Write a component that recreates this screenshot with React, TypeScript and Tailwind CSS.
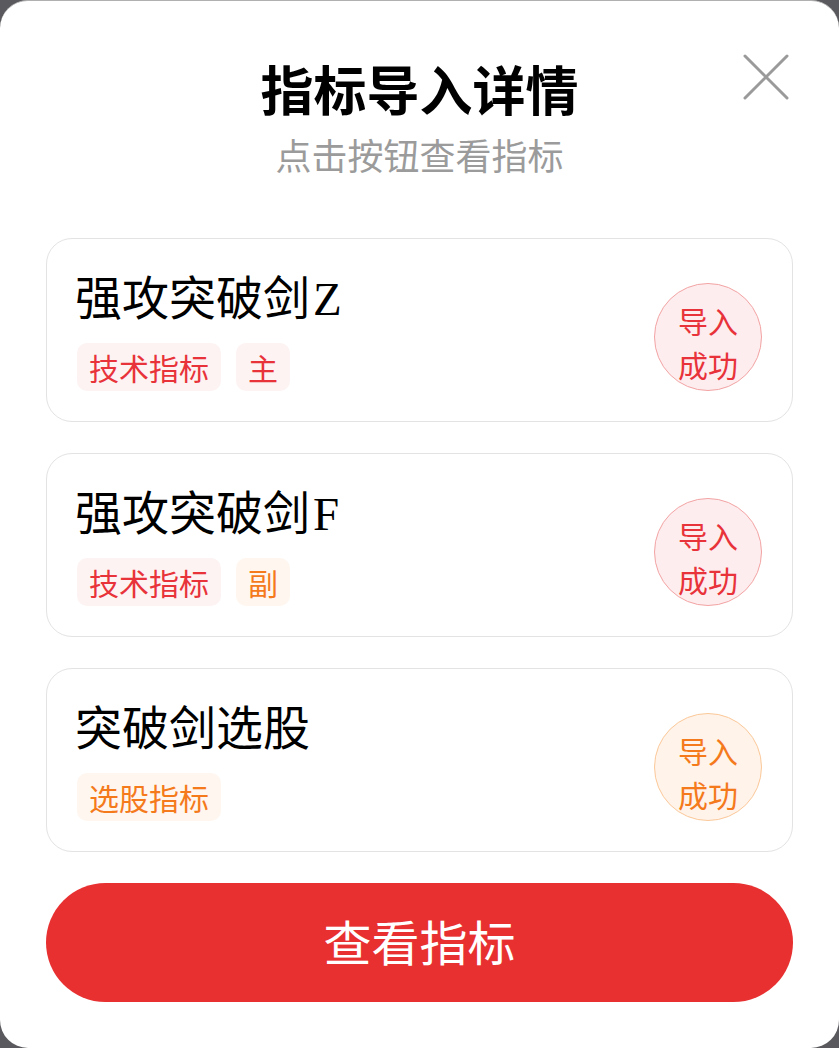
import React from 'react';

type Tone = 'red' | 'orange';

// 指标列表
const items: { name: string; suffix: string; tags: { label: string; tone: Tone }[]; tone: Tone }[] = [
  { name: '强攻突破剑', suffix: 'Z', tags: [{ label: '技术指标', tone: 'red' }, { label: '主', tone: 'red' }], tone: 'red' },
  { name: '强攻突破剑', suffix: 'F', tags: [{ label: '技术指标', tone: 'red' }, { label: '副', tone: 'orange' }], tone: 'red' },
  { name: '突破剑选股', suffix: '', tags: [{ label: '选股指标', tone: 'orange' }], tone: 'orange' },
];

const tagStyle: Record<Tone, string> = {
  red: 'bg-[#fdf3f3] text-[#e8333a]',
  orange: 'bg-[#fff6ef] text-[#f47a1c]',
};

const badgeStyle: Record<Tone, string> = {
  red: 'bg-[#fdedef] border-[#f3a3a3] text-[#e8333a]',
  orange: 'bg-[#fff3ea] border-[#fbc899] text-[#f47a1c]',
};

const Card = ({ item }: { item: (typeof items)[number] }) => (
  <div className="flex h-[184px] items-end justify-between rounded-[26px] border border-[#e3e3e3] px-[30px] pt-[27px] pb-[30px]">
    <div className="flex flex-col">
      <div className="-ml-[2px] h-[56px] whitespace-nowrap text-[47px] leading-[56px] text-black">
        {item.name}
        {item.suffix && (
          <span className="ml-[3px]" style={{ fontFamily: '"Liberation Serif", serif' }}>
            {item.suffix}
          </span>
        )}
      </div>
      <div className="mt-[20px] flex gap-[15px]">
        {item.tags.map((t) => (
          <span
            key={t.label}
            className={`h-[48px] rounded-[10px] px-[12px] text-[30px] leading-[48px] ${tagStyle[t.tone]}`}
          >
            {t.label}
          </span>
        ))}
      </div>
    </div>
    <div
      className={`flex h-[108px] w-[108px] flex-col items-center rounded-full border pt-[14px] text-[30px] leading-[44px] ${badgeStyle[item.tone]}`}
    >
      <span>导入</span>
      <span>成功</span>
    </div>
  </div>
);

const App = () => {
  return (
    <div
      className="h-[1048px] w-[839px] bg-[#5a5a5e]"
      style={{ fontFamily: '"Noto Sans CJK SC", "Noto Sans", sans-serif' }}
    >
      <div className="relative flex h-[1048px] flex-col rounded-[28px] border-t border-[#b0b0b0] bg-white px-[46px]">
        <button className="absolute left-[742px] top-[52px] h-[48px] w-[48px]" aria-label="关闭">
          <svg viewBox="0 0 48 48" className="h-[48px] w-[48px]" fill="none" stroke="#9a9a9a" strokeWidth="3" strokeLinecap="round">
            <path d="M3 3 L45 45 M45 3 L3 45" />
          </svg>
        </button>

        <h1 className="mt-[55px] text-center text-[53px] font-bold leading-[64px] text-black">指标导入详情</h1>
        <p className="mt-[12px] text-center text-[36px] leading-[44px] text-[#9b9b9b]">点击按钮查看指标</p>

        <div className="mt-[62px] flex flex-col gap-[31px]">
          {items.map((item, i) => (
            <Card key={i} item={item} />
          ))}
        </div>

        <button className="mt-[31px] h-[119px] w-full rounded-full bg-[#e83031] pb-[5px] text-[48px] text-white">
          查看指标
        </button>
      </div>
    </div>
  );
};

export default App;
